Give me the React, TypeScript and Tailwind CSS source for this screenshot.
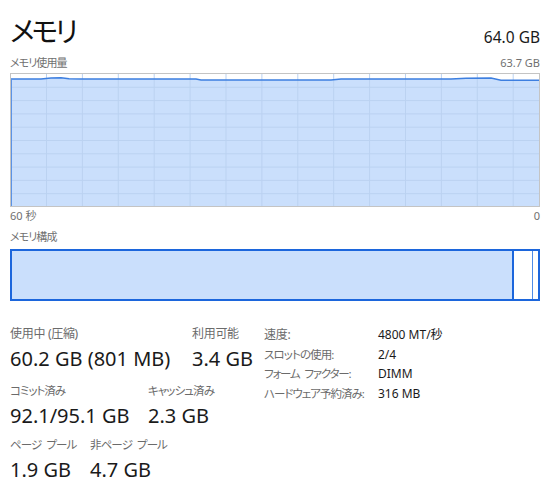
import React from "react";

const pts: [number, number][] = [
  [0, 5], [30, 5], [40, 4], [50, 3.8], [58, 4.8], [70, 5], [185, 5], [190, 6], [320, 6], [330, 5], [440, 5], [455, 4.2], [480, 4], [490, 6.3], [528, 6.3],
];

function Graph() {
  const W = 528;
  const H = 132;
  const vlines = Array.from({ length: 14 }, (_, i) => 35.5 + i * 35.9);
  const hlines = Array.from({ length: 9 }, (_, i) => (i + 1) * 13.3);
  const line = pts.map((p) => p.join(",")).join(" ");
  const poly = `0,${H} ${line} ${W},${H}`;
  return (
    <div className="h-[134px] border border-[#c4c4c4]">
      <svg width={W} height={H} className="block">
        <polygon points={poly} fill="#cadffc" />
        {vlines.map((x) => (
          <line key={"v" + x} x1={x} x2={x} y1={0} y2={H} stroke="#bbd2f1" strokeWidth={1} />
        ))}
        {hlines.map((y) => (
          <line key={"h" + y} x1={0} x2={W} y1={y} y2={y} stroke="#bbd2f1" strokeWidth={1} />
        ))}
        <polyline points={line} fill="none" stroke="#3d7fe0" strokeWidth={1.5} />
        <line x1={0.5} x2={0.5} y1={5} y2={H} stroke="#5b93e6" strokeWidth={1} />
      </svg>
    </div>
  );
}

function Stat({ label, value, className, lc }: { label: string; value: string; className?: string; lc: string }) {
  return (
    <div className={className}>
      <div className={"leading-[18px] text-[#6b6b6b] whitespace-nowrap " + lc}>{label}</div>
      <div className="mt-[3px] text-[20px] leading-[26px] text-[#1a1a1a] whitespace-nowrap">{value}</div>
    </div>
  );
}

const specs: [string, string, string][] = [
  ["速度:", "4800 MT/秒", "text-[12px] tracking-[-0.3px]"],
  ["スロットの使用:", "2/4", "text-[11.5px] tracking-[-0.9px]"],
  ["フォーム ファクター:", "DIMM", "text-[11.5px] tracking-[-1.2px] [word-spacing:3px]"],
  ["ハードウェア予約済み:", "316 MB", "text-[11.5px] tracking-[-1px]"],
];

export default function App() {
  return (
    <div className="w-[550px] h-[487px] bg-white pl-[10px] pr-[10px] font-['Noto_Sans','Noto_Sans_CJK_JP',sans-serif] [font-feature-settings:'palt'] overflow-hidden">
      <div className="flex items-start justify-between h-[54px]">
        <div className="mt-[14px] text-[28px] leading-[34px] text-[#111] tracking-[-3px]">メモリ</div>
        <div className="mt-[27px] text-[15.5px] leading-[20px] text-[#1a1a1a]">64.0 GB</div>
      </div>
      <div className="flex justify-between h-[19px] text-[11px] leading-[17px] text-[#707070]">
        <span className="tracking-[-0.9px]">メモリ使用量</span>
        <span>63.7 GB</span>
      </div>
      <Graph />
      <div className="flex justify-between h-[21px] text-[11px] leading-[17px] text-[#707070]">
        <span>60 秒</span>
        <span>0</span>
      </div>
      <div className="h-[21px] text-[11px] leading-[17px] text-[#707070] tracking-[-0.9px]">メモリ構成</div>
      <div className="flex h-[52px] border-2 border-[#1c66dc]">
        <div className="w-[500px] bg-[#cadffc]" />
        <div className="w-[2px] bg-[#1c66dc]" />
        <div className="w-[18px] bg-white" />
        <div className="w-[1px] bg-[#4f8ce6]" />
        <div className="w-[5px] bg-white" />
      </div>
      <div className="flex mt-[24px]">
        <div className="w-[254px]">
          <div className="flex">
            <Stat className="w-[182px]" lc="text-[12px] tracking-[-0.3px]" label="使用中 (圧縮)" value="60.2 GB (801 MB)" />
            <Stat lc="text-[12px] tracking-[-0.3px]" label="利用可能" value="3.4 GB" />
          </div>
          <div className="flex mt-[10px]">
            <Stat className="w-[138px]" lc="text-[11.5px] tracking-[-1px]" label="コミット済み" value="92.1/95.1 GB" />
            <Stat lc="text-[11.5px] tracking-[-0.9px]" label="キャッシュ済み" value="2.3 GB" />
          </div>
          <div className="flex mt-[7px]">
            <Stat className="w-[80px]" lc="text-[11.5px] tracking-[-0.9px] [word-spacing:3px]" label="ページ プール" value="1.9 GB" />
            <Stat lc="text-[11.5px] tracking-[-0.9px] [word-spacing:3px]" label="非ページ プール" value="4.7 GB" />
          </div>
        </div>
        <div className="leading-[19.7px]">
          {specs.map(([k, v, t]) => (
            <div key={k} className="flex">
              <div className={"w-[114px] text-[#6b6b6b] whitespace-nowrap " + t}>{k}</div>
              <div className="text-[12px] text-[#1a1a1a] whitespace-nowrap">{v}</div>
            </div>
          ))}
        </div>
      </div>
    </div>
  );
}
